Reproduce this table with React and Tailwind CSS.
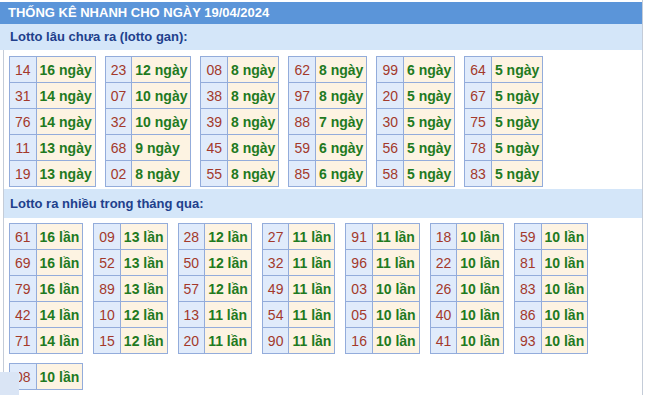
import React from "react";

const gan = [
  [["14", 16], ["31", 14], ["76", 14], ["11", 13], ["19", 13]],
  [["23", 12], ["07", 10], ["32", 10], ["68", 9], ["02", 8]],
  [["08", 8], ["38", 8], ["39", 8], ["45", 8], ["55", 8]],
  [["62", 8], ["97", 8], ["88", 7], ["59", 6], ["85", 6]],
  [["99", 6], ["20", 5], ["30", 5], ["56", 5], ["58", 5]],
  [["64", 5], ["67", 5], ["75", 5], ["78", 5], ["83", 5]],
];

const nhieu = [
  [["61", 16], ["69", 16], ["79", 16], ["42", 14], ["71", 14]],
  [["09", 13], ["52", 13], ["89", 13], ["10", 12], ["15", 12]],
  [["28", 12], ["50", 12], ["57", 12], ["13", 11], ["20", 11]],
  [["27", 11], ["32", 11], ["49", 11], ["54", 11], ["90", 11]],
  [["91", 11], ["96", 11], ["03", 10], ["05", 10], ["16", 10]],
  [["18", 10], ["22", 10], ["26", 10], ["40", 10], ["41", 10]],
  [["59", 10], ["81", 10], ["83", 10], ["86", 10], ["93", 10]],
  [["08", 10]],
];

function Tbl({ rows, unit }) {
  return (
    <table className="border-collapse border border-[#93acdb] text-[14px] leading-none">
      <tbody>
        {rows.map(([n, v], i) => (
          <tr key={i} className="h-[26px]">
            <td className="border border-[#93acdb] bg-[#e0ebfb] px-[5px] text-center text-[#a3392b]">{n}</td>
            <td className="border border-[#93acdb] bg-[#fdf3e2] px-[3px] font-bold text-[#1f7a1f]">
              {v} {unit}
            </td>
          </tr>
        ))}
      </tbody>
    </table>
  );
}

export default function App() {
  return (
    <div className="relative h-[395px] w-[645px] overflow-hidden bg-white font-['Liberation_Sans',Arial,sans-serif]">
      <div className="w-[643px] border-r border-[#c4ccd8] pt-[2px] h-full">
        <div className="flex h-[22px] items-center bg-[#5b95d9] pl-[8px] text-[13px] font-bold text-white">
          THỐNG KÊ NHANH CHO NGÀY 19/04/2024
        </div>
        <div className="flex h-[26px] items-center bg-[#d4e6f9] pl-[10px] text-[13px] font-bold text-[#213f8c]">
          Lotto lâu chưa ra (lotto gan):
        </div>
        <div className="ml-[3px] h-full border-l border-[#c4ccd8]">
          <div className="flex flex-wrap gap-x-[9px] pl-[5px] pt-[6px] pb-[2px]">
            {gan.map((t, i) => (
              <Tbl key={i} rows={t} unit="ngày" />
            ))}
          </div>
          <div className="flex h-[29px] items-center bg-[#d4e6f9] pl-[6px] text-[13px] font-bold text-[#213f8c]">
            Lotto ra nhiều trong tháng qua:
          </div>
          <div className="flex flex-wrap items-start gap-x-[10px] gap-y-[9px] pl-[5px] pt-[5px]">
            {nhieu.map((t, i) => (
              <Tbl key={i} rows={t} unit="lần" />
            ))}
          </div>
        </div>
      </div>
      <div className="absolute left-0 top-[372px] h-[23px] w-[19px] bg-[#dae5f5]" />
    </div>
  );
}
